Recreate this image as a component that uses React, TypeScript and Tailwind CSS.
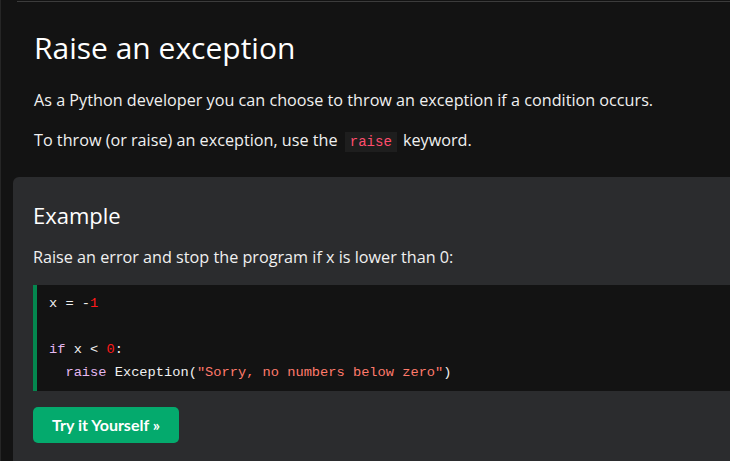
export default function App() {
  return (
    <div className="h-[461px] w-[730px] overflow-hidden bg-[#131313] border-l border-[#262626] font-['Open_Sans','Noto_Sans',sans-serif] text-[#f0f0f0]">
      <div className="ml-4 h-px bg-[#3c3c3c] mt-px" />
      <div className="pl-[33px] pt-[26px]">
        <h1 className="text-[30px] leading-[40px] font-normal text-white">Raise an exception</h1>
        <p className="mt-[20px] text-[16.2px] leading-[24px]">
          As a Python developer you can choose to throw an exception if a condition occurs.
        </p>
        <p className="mt-[16px] text-[16.2px] leading-[24px]">
          To throw (or raise) an exception, use the{" "}
          <code className="ml-[3px] mr-[2px] bg-[#1e1e1e] px-[5px] py-0.5 font-['Liberation_Mono',monospace] text-[14px] text-[#ff4d6d]">raise</code>{" "}
          keyword.
        </p>
      </div>
      <div className="ml-3 mt-[23px] rounded-tl-md bg-[#2b2c2e] pl-5 pt-[23px] pb-6">
        <h2 className="text-[22px] leading-[30px] text-white">Example</h2>
        <p className="mt-[15px] text-[16.2px] leading-[24px]">
          Raise an error and stop the program if x is lower than 0:
        </p>
        <div className="mt-[16px] border-l-4 border-[#04874f] bg-[#131313] pl-3 py-[7px] font-['Liberation_Mono',monospace] text-[13.7px] leading-[23px] whitespace-pre text-[#f0f0f0]">
          <div>
            x = -<span className="text-[#ff1a1a]">1</span>
          </div>
          <div>&nbsp;</div>
          <div>
            <span className="text-[#e5b8f0]">if</span> x &lt; <span className="text-[#ff1a1a]">0</span>:
          </div>
          <div>
            {"  "}
            <span className="text-[#e5b8f0]">raise</span> Exception(
            <span className="text-[#ff7a6b]">"Sorry, no numbers below zero"</span>)
          </div>
        </div>
        <button className="mt-[16px] h-9 rounded-[5px] bg-[#04aa6d] px-[19px] font-['Lato',sans-serif] text-[16px] font-bold text-white">
          Try it Yourself »
        </button>
      </div>
    </div>
  );
}
